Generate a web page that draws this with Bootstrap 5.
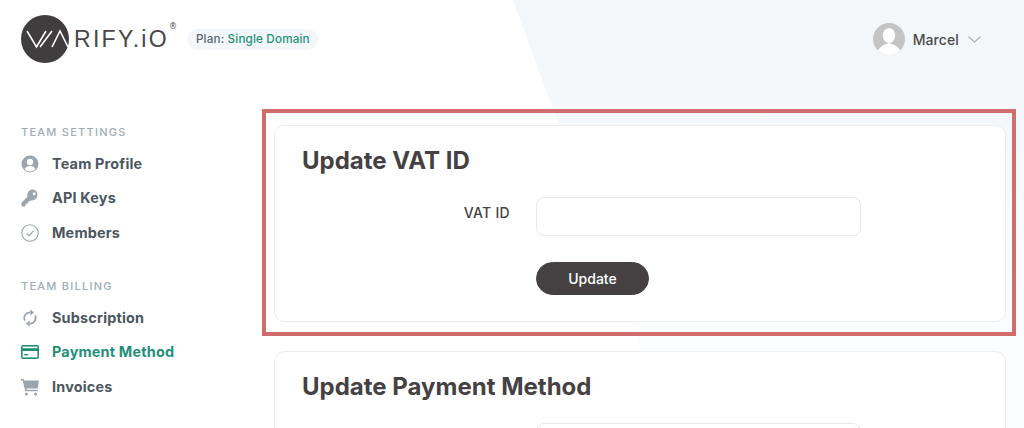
<!DOCTYPE html>
<html lang="en">
<head>
    <meta charset="UTF-8">
    <meta name="viewport" content="width=device-width, initial-scale=1.0">
    <title>Payment Method - Varify.io</title>
    <link href="https://cdn.jsdelivr.net/npm/bootstrap@5.3.0/dist/css/bootstrap.min.css" rel="stylesheet">
    <style>
        html, body { height: 428px; overflow: hidden; }
        body { background: #fff; font-family: Inter, "Noto Sans", sans-serif; color: #454142; position: relative; }
        .bg-shape {
            position: absolute; inset: 0; z-index: 0;
            background: linear-gradient(#f3f7fa, #f4f8fa 110px, #fbfcfe 330px);
            clip-path: polygon(513px 0, 1024px 0, 1024px 428px, 669px 428px);
        }
        .page-wrap { position: relative; z-index: 1; }
        .top-bar { height: 109px; padding: 15px 43px 0 21px; }
        .logo-mark { width: 52px; height: 48px; flex: none; }
        .logo-text { font-family: "Liberation Sans", sans-serif; font-size: 23px; letter-spacing: 2.3px; color: #4a4748; line-height: 48px; margin-left: 1px; }
        .logo-reg { font-family: "DejaVu Sans", sans-serif; font-size: 8px; line-height: 10px; color: #4a4748; align-self: flex-start; margin: 7px 0 0 0; width: 7px; }
        .plan-pill { background: #f3f7fa; border-radius: 11px; font-size: 11.7px; height: 21px; line-height: 21px; padding: 0 8px 0 9px; margin: 1px 0 0 11px; color: #5b6570; white-space: nowrap; font-weight: 500; letter-spacing: .15px; }
        .plan-pill b { color: #1f8f77; font-weight: 500; }
        .user-box { height: 48px; gap: 8px; }
        .user-name { font-size: 14px; color: #4d4a4b; font-weight: 500; letter-spacing: .1px; margin-right: 1px; }
        .side-col { width: 262px; flex: none; padding: 0 0 0 21px; }
        .side-head { font-size: 11px; line-height: 13px; letter-spacing: 1.25px; color: #a0acb6; font-weight: 500; margin-top: 17px; margin-bottom: 7.5px; }
        .side-head.second { margin-top: 29.5px; margin-bottom: 8px; }
        .side-link { display: flex; align-items: center; gap: 13px; height: 34.5px; padding: 0; font-size: 14.4px; font-weight: 700; color: #4b5661; letter-spacing: .2px; }
        .side-link.active { color: #1f8f77; }
        .side-link svg { width: 18px; height: 18px; flex: none; }
        .mark-box { border: 4px solid #d16d6d; margin-right: 8px; padding: 12px 6px 10px 8px; height: 227px; width: 754px; }
        .panel { border: 1px solid #ebedef; border-radius: 10px; background: #fff; --bs-card-bg: #fff; }
        .panel-main { height: 197px; }
        .panel-body { padding: 20px 27px; }
        .panel-title { font-size: 24px; font-weight: 700; color: #454142; line-height: 30px; margin: 0; letter-spacing: 0; }
        .field-row { margin-top: 21px; }
        .field-label { width: 208px; text-align: right; font-size: 14px; font-weight: 500; color: #454142; flex: none; letter-spacing: .3px; margin-bottom: 8px; }
        .field-input { width: 325px; height: 39px; margin-left: 26px; border: 1px solid #e6e8eb; border-radius: 8px; box-shadow: none; }
        .btn-update { --bs-btn-bg: #454142; --bs-btn-color: #fff; --bs-btn-border-color: #454142; --bs-btn-hover-bg: #454142; --bs-btn-hover-color: #fff; width: 113px; height: 33px; padding: 0; border-radius: 17px; font-size: 14px; font-weight: 500; margin: 26px 0 0 234px; }
        .panel-two { margin: 15px 0 0 12px; width: 732px; height: 77px; overflow: hidden; border-bottom: 0; border-bottom-left-radius: 0; border-bottom-right-radius: 0; }
        .panel-two .field-input { margin-left: 234px; }
    </style>
</head>
<body>
    <div class="bg-shape"></div>
    <div class="page-wrap">
        <header class="top-bar d-flex align-items-start justify-content-between">
            <div class="d-flex align-items-center">
                <svg class="logo-mark" viewBox="0 0 52 48">
                    <circle cx="24" cy="24" r="24" fill="#3f3d3e"/>
                    <path d="M6 16L15.5 32L25 16M19 32L31 16M31 32L39 16L47 32" fill="none" stroke="#fff" stroke-width="1.6"/>
                </svg>
                <span class="logo-text">RIFY.iO</span>
                <span class="logo-reg">®</span>
                <span class="plan-pill">Plan: <b>Single Domain</b></span>
            </div>
            <div class="user-box d-flex align-items-center">
                <svg width="32" height="32" viewBox="0 0 32 32">
                    <defs><clipPath id="avatarClip"><circle cx="16" cy="16" r="16"/></clipPath></defs>
                    <circle cx="16" cy="16" r="16" fill="#c4c4c4"/>
                    <g clip-path="url(#avatarClip)" fill="#fff">
                        <ellipse cx="16" cy="12.5" rx="6.2" ry="7.5"/>
                        <path d="M3 34C4 25 9 22 16 20C23 22 28 25 29 34Z"/>
                    </g>
                </svg>
                <span class="user-name">Marcel</span>
                <svg width="13" height="7" viewBox="0 0 13 7"><path d="M.5.8L6.5 6L12.5.8" fill="none" stroke="#aab1b8" stroke-width="1.2"/></svg>
            </div>
        </header>
        <div class="d-flex">
            <aside class="side-col">
                <div class="side-head">TEAM SETTINGS</div>
                <nav class="nav flex-column">
                    <a class="side-link text-decoration-none" href="#">
                        <svg viewBox="0 0 18 18"><circle cx="9" cy="9" r="8.5" fill="#9aa5ae"/><circle cx="9" cy="7" r="3.2" fill="#fff"/><path d="M3.6 14.2C4.5 11.8 6.5 11 9 11s4.5.8 5.4 3.2A7 7 0 0 1 9 16.5a7 7 0 0 1-5.4-2.3Z" fill="#fff"/></svg>
                        Team Profile
                    </a>
                    <a class="side-link text-decoration-none" href="#">
                        <svg viewBox="0 0 18 18"><path d="M11.8.6a5.6 5.6 0 0 0-5.4 7.2L.8 13.4a1 1 0 0 0-.3.7v2.4c0 .5.4.9.9.9h2.2l1-1v-1.6h1.6l1-1v-1.4h1.4l1-1a5.6 5.6 0 1 0 2.2-11.2Zm1.4 5.6a1.5 1.5 0 1 1 0-3 1.5 1.5 0 0 1 0 3Z" fill="#9aa5ae"/></svg>
                        API Keys
                    </a>
                    <a class="side-link text-decoration-none" href="#">
                        <svg viewBox="0 0 18 18" fill="none" stroke="#9aa5ae"><circle cx="9" cy="9" r="8.2" stroke-width="1.1"/><path d="M5.6 9.4L8 11.6L12.6 6.8" stroke-width="1.2"/></svg>
                        Members
                    </a>
                </nav>
                <div class="side-head second">TEAM BILLING</div>
                <nav class="nav flex-column">
                    <a class="side-link text-decoration-none" href="#">
                        <svg viewBox="0 0 18 18" fill="none" stroke="#9aa5ae" stroke-width="1.7"><path d="M3.9 11.6A5.7 5.7 0 0 1 9.6 3.4"/><path d="M14.1 6.4A5.7 5.7 0 0 1 8.4 14.6"/><path d="M9.4 .4L13 3.4L9.4 6.4Z" fill="#9aa5ae" stroke="none"/><path d="M8.6 17.6L5 14.6L8.6 11.6Z" fill="#9aa5ae" stroke="none"/></svg>
                        Subscription
                    </a>
                    <a class="side-link active text-decoration-none" href="#">
                        <svg viewBox="0 0 18 18"><rect x="0" y="2" width="18" height="14" rx="2" fill="#1f8f77"/><rect x="1.6" y="8" width="14.8" height="6.4" fill="#fff"/><rect x="1.6" y="3.6" width="14.8" height="1.6" fill="#fff"/><rect x="3.2" y="11" width="4" height="1.4" fill="#1f8f77"/></svg>
                        Payment Method
                    </a>
                    <a class="side-link text-decoration-none" href="#">
                        <svg viewBox="0 0 18 18"><path d="M0 1h2.6l.8 1.6H18l-1.4 7.8H5.2l.4 1.4h11.2v1.4H4.2L1.8 2.4H0Z" fill="#9aa5ae"/><circle cx="5.4" cy="16" r="1.5" fill="#9aa5ae"/><circle cx="14.6" cy="16" r="1.5" fill="#9aa5ae"/></svg>
                        Invoices
                    </a>
                </nav>
            </aside>
            <main>
                <div class="mark-box">
                    <div class="card panel panel-main">
                        <div class="panel-body">
                            <h2 class="panel-title">Update VAT ID</h2>
                            <div class="field-row d-flex align-items-center">
                                <label class="field-label" for="vatId">VAT ID</label>
                                <input class="form-control field-input" id="vatId" type="text">
                            </div>
                            <button class="btn btn-update" type="button">Update</button>
                        </div>
                    </div>
                </div>
                <div class="card panel panel-two">
                    <div class="panel-body">
                        <h2 class="panel-title">Update Payment Method</h2>
                        <div class="field-row">
                            <input class="form-control field-input" type="text" aria-label="Card">
                        </div>
                    </div>
                </div>
            </main>
        </div>
    </div>
</body>
</html>
